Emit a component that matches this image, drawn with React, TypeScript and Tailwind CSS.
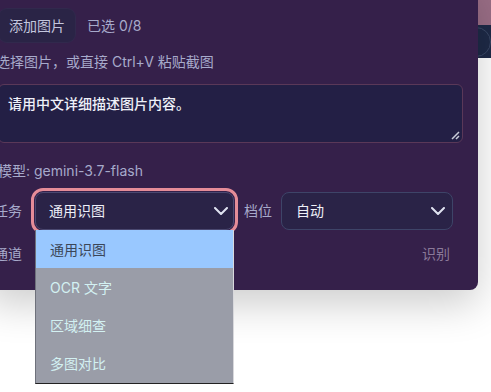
import React from "react";

function Chevron({ className }: { className?: string }) {
  return (
    <svg className={className} width="14" height="8" viewBox="0 0 14 8" fill="none">
      <path d="M1 1l6 6 6-6" stroke="#dfe2f0" strokeWidth="2" strokeLinecap="round" strokeLinejoin="round" />
    </svg>
  );
}

export default function App() {
  const font = { fontFamily: 'Inter, "Noto Sans CJK SC", "Noto Sans", sans-serif' };
  return (
    <div className="relative w-[491px] h-[392px] overflow-hidden bg-white" style={font}>
      {/* page content behind the panel */}
      <div className="absolute right-0 top-0 w-[40px] flex flex-col">
        <div className="h-[25px] bg-[#9a6e86] rounded-bl-[8px]" />
        <div className="h-[33px] bg-[#1e2a47] flex items-center">
          <div className="w-[30px] h-[30px] ml-[10px] rounded-full border border-[#3a4866]" />
        </div>
      </div>

      {/* panel */}
      <div className="absolute left-[-14px] top-[-20px] w-[492px] h-[310px] bg-[#35204a] rounded-[8px] pl-[12px] pr-[15px] pt-[28px] shadow-[0_14px_40px_rgba(0,0,0,0.2)]">
        <div className="flex items-center">
          <button className="h-[35px] px-[10px] rounded-[9px] bg-[#2a2446] border border-[#31294d] text-[14px] leading-[20px] text-[#c3c6de]">
            添加图片
          </button>
          <span className="ml-[11px] text-[14px] leading-[20px] text-[#a7aacb]">已选 0/8</span>
        </div>
        <div className="mt-[9px] text-[14px] leading-[19px] text-[#a7aacb] -ml-[2px]">
          选择图片，或直接 Ctrl+V 粘贴截图
        </div>
        <div className="relative mt-[13px] h-[59px] rounded-[6px] border border-[#5a3858] bg-[#231f45] px-[9px] pt-[9px]">
          <div className="text-[14px] leading-[20px] text-[#eef0f8] font-medium">请用中文详细描述图片内容。</div>
          <svg className="absolute right-[2px] bottom-[2px]" width="9" height="9" viewBox="0 0 9 9">
            <path d="M8 1L1 8M8 5L5 8" stroke="#c9cbd8" strokeWidth="1.5" />
          </svg>
        </div>
        <div className="mt-[18px] text-[14px] leading-[20px] text-[#a7aacb]">模型: gemini-3.7-flash</div>

        <div className="mt-[11px] flex items-center -ml-[4px]">
          <span className="w-[28px] text-[14px] leading-[20px] text-[#a7aacb]">任务</span>
          <div className="ml-[13px] w-[199px] h-[38px] rounded-[8px] border border-[#4a4870] bg-[#2a2347] outline outline-[3px] outline-offset-[1px] outline-[#e58c98] flex items-center justify-between pl-[13px] pr-[5px]">
            <span className="text-[14px] leading-[20px] text-[#eef0f8]">通用识图</span>
            <Chevron />
          </div>
          <span className="ml-[10px] text-[14px] leading-[20px] text-[#a7aacb]">档位</span>
          <div className="ml-[9px] w-[172px] h-[38px] rounded-[8px] border border-[#3e4468] bg-[#2a2347] flex items-center justify-between pl-[14px] pr-[7px]">
            <span className="text-[14px] leading-[20px] text-[#eef0f8]">自动</span>
            <Chevron />
          </div>
        </div>

        <div className="mt-[14px] flex items-center justify-between -ml-[4px]">
          <span className="text-[14px] leading-[20px] text-[#a7aacb]">通道</span>
          <span className="mr-[13px] text-[14px] leading-[20px] text-[#8b7a99]">识别</span>
        </div>
      </div>

      {/* native select dropdown */}
      <div className="absolute left-[35px] top-[230px] w-[199px] h-[154px] bg-[#9a9da8] border-l border-[#6e717b] border-b border-b-[#222] border-r border-r-[#d8d8dc] flex flex-col">
        <div className="h-[38px] bg-[#99c8ff] flex items-center pl-[14px] text-[14px] text-[#3b4658]">通用识图</div>
        <div className="h-[38px] flex items-center pl-[14px] text-[14px] text-[#d3f1f2]">OCR 文字</div>
        <div className="h-[38px] flex items-center pl-[14px] text-[14px] text-[#d3f1f2]">区域细查</div>
        <div className="h-[38px] flex items-center pl-[14px] text-[14px] text-[#d3f1f2]">多图对比</div>
      </div>
    </div>
  );
}
